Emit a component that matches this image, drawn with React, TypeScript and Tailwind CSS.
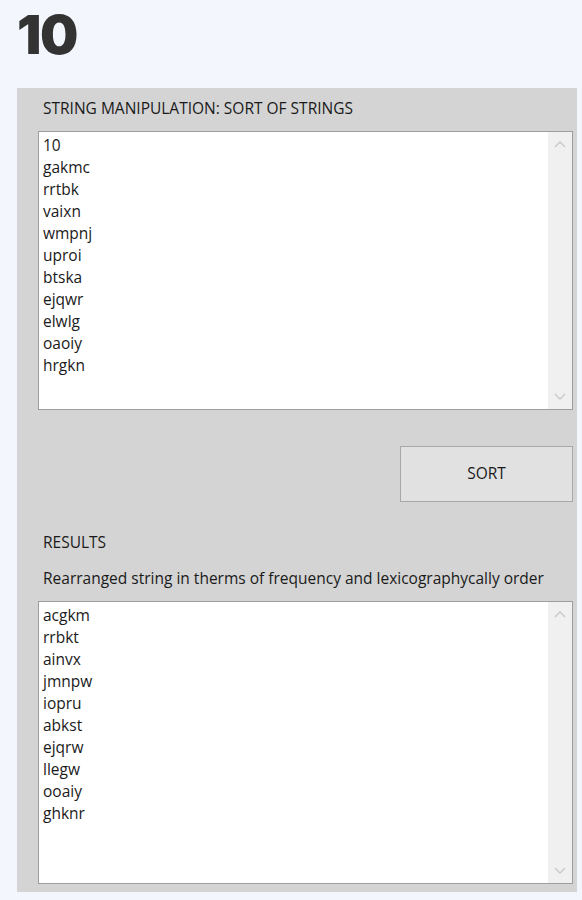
import React from "react";

const input = ["10", "gakmc", "rrtbk", "vaixn", "wmpnj", "uproi", "btska", "ejqwr", "elwlg", "oaoiy", "hrgkn"];
const output = ["acgkm", "rrbkt", "ainvx", "jmnpw", "iopru", "abkst", "ejqrw", "llegw", "ooaiy", "ghknr"];

function Chevron({ up }: { up?: boolean }) {
  return (
    <svg width="12" height="8" viewBox="0 0 12 8" fill="none">
      <path d={up ? "M1 7 L6 2 L11 7" : "M1 1 L6 6 L11 1"} stroke="#c8c8c8" strokeWidth="1.3" />
    </svg>
  );
}

function TextBox({ lines, h }: { lines: string[]; h: string }) {
  return (
    <div className={`flex border border-[#9e9e9e] bg-white ${h}`}>
      <div className="flex-1 pl-[4px] pt-[2px] text-[15.5px] leading-[22px] text-[#1a1a1a]">
        {lines.map((l, i) => (
          <div key={i}>{l}</div>
        ))}
      </div>
      <div className="flex w-[24px] flex-col items-center justify-between bg-[#f0f0f0] py-[8px]">
        <Chevron up />
        <Chevron />
      </div>
    </div>
  );
}

export default function App() {
  return (
    <div className="min-h-[900px] bg-[#f3f7fd] pl-[17px] pr-[5px] pt-[5px] font-['Open_Sans',sans-serif]">
      <div className="h-[60px] font-['Inter',sans-serif] text-[54px] font-black leading-[60px] tracking-[-1.5px] text-[#333333]">
        10
      </div>
      <div className="mt-[23px] w-[560px] bg-[#d4d4d4] pb-[8px] pl-[21px] pr-[4px] pt-[10px]">
        <div className="pl-[5px] text-[15.5px] leading-[20px] text-[#1a1a1a]">STRING MANIPULATION: SORT OF STRINGS</div>
        <div className="mt-[13px]">
          <TextBox lines={input} h="h-[279px]" />
        </div>
        <div className="mt-[36px] flex justify-end">
          <div className="flex h-[56px] w-[173px] items-center justify-center border border-[#a8a8a8] bg-[#e1e1e1] text-[15.5px] text-[#1a1a1a]">
            SORT
          </div>
        </div>
        <div className="mt-[30px] pl-[5px] text-[15.5px] leading-[20px] text-[#1a1a1a]">RESULTS</div>
        <div className="mt-[16px] pl-[5px] text-[15.5px] leading-[20px] text-[#1a1a1a]">
          Rearranged string in therms of frequency and lexicographycally order
        </div>
        <div className="mt-[13px]">
          <TextBox lines={output} h="h-[283px]" />
        </div>
      </div>
    </div>
  );
}
